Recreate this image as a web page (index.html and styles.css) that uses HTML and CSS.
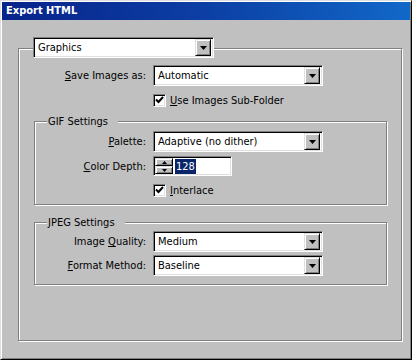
FILE: index.html
```html
<!DOCTYPE html>
<html>
<head>
<meta charset="utf-8">
<title>Export HTML</title>
<link rel="stylesheet" href="styles.css">
</head>
<body>
<div class="window">
  <div class="titlebar">Export HTML</div>
  <div class="client">
    <div class="group outer">
      <div class="select sel-head">
        <span class="val">Graphics</span>
        <span class="dd"><svg width="7" height="4" viewBox="0 0 7 4"><path d="M0 0h7L3.5 4z" fill="#000"/></svg></span>
      </div>

      <div class="row r-save">
        <span class="lbl lbl-outer"><u>S</u>ave Images as:</span>
        <div class="select">
          <span class="val">Automatic</span>
          <span class="dd"><svg width="7" height="4" viewBox="0 0 7 4"><path d="M0 0h7L3.5 4z" fill="#000"/></svg></span>
        </div>
      </div>

      <div class="check c-outer">
        <span class="cb"><svg width="9" height="9" viewBox="0 0 9 9"><path d="M1 3.5l2.5 2.5 4.5-5" stroke="#000" stroke-width="2" fill="none"/></svg></span>
        <span class="ctext"><u>U</u>se Images Sub-Folder</span>
      </div>

      <div class="group inner gif">
        <div class="legend">GIF Settings</div>
        <div class="row r-palette">
          <span class="lbl"><u>P</u>alette:</span>
          <div class="select">
            <span class="val">Adaptive (no dither)</span>
            <span class="dd"><svg width="7" height="4" viewBox="0 0 7 4"><path d="M0 0h7L3.5 4z" fill="#000"/></svg></span>
          </div>
        </div>
        <div class="row r-depth">
          <span class="lbl"><u>C</u>olor Depth:</span>
          <div class="spin">
            <div class="spin-btns">
              <span class="sbtn"><svg width="5" height="3" viewBox="0 0 5 3"><path d="M2.5 0L5 3H0z" fill="#000"/></svg></span>
              <span class="sbtn"><svg width="5" height="3" viewBox="0 0 5 3"><path d="M0 0h5L2.5 3z" fill="#000"/></svg></span>
            </div>
            <span class="spin-val"><span class="hl">128</span></span>
          </div>
        </div>
        <div class="check c-inner">
          <span class="cb"><svg width="9" height="9" viewBox="0 0 9 9"><path d="M1 3.5l2.5 2.5 4.5-5" stroke="#000" stroke-width="2" fill="none"/></svg></span>
          <span class="ctext"><u>I</u>nterlace</span>
        </div>
      </div>

      <div class="group inner jpeg">
        <div class="legend">JPEG Settings</div>
        <div class="row r-quality">
          <span class="lbl">Image <u>Q</u>uality:</span>
          <div class="select">
            <span class="val">Medium</span>
            <span class="dd"><svg width="7" height="4" viewBox="0 0 7 4"><path d="M0 0h7L3.5 4z" fill="#000"/></svg></span>
          </div>
        </div>
        <div class="row r-format">
          <span class="lbl"><u>F</u>ormat Method:</span>
          <div class="select">
            <span class="val">Baseline</span>
            <span class="dd"><svg width="7" height="4" viewBox="0 0 7 4"><path d="M0 0h7L3.5 4z" fill="#000"/></svg></span>
          </div>
        </div>
      </div>
    </div>
  </div>
</div>
</body>
</html>
```

FILE: styles.css
```css
* { box-sizing: border-box; }

html, body {
  margin: 0;
  padding: 0;
  background: #c0c0c0;
}

body {
  width: 412px;
  height: 360px;
  overflow: hidden;
  font-family: "DejaVu Sans Condensed", "Liberation Sans", sans-serif;
  font-size: 11px;
  color: #000;
}

.window {
  width: 412px;
  height: 360px;
  background: #c0c0c0;
  border: 1px solid;
  border-color: #dfdfdf #000 #000 #dfdfdf;
  box-shadow: inset 1px 1px 0 #fff, inset -1px -1px 0 #808080;
  padding: 1px;
  display: flex;
  flex-direction: column;
}

.titlebar {
  height: 18px;
  line-height: 18px;
  padding-left: 4px;
  color: #fff;
  font-weight: bold;
  background: linear-gradient(to right, #08238a 0%, #0c3fa4 50%, #1168c8 100%);
}

.client {
  flex: 1;
  padding: 28px 0 0 16px;
}

.group {
  display: flex;
  flex-direction: column;
  align-items: flex-start;
  border: 1px solid #808080;
  box-shadow: inset 1px 1px 0 #fff, 1px 1px 0 #fff;
}

.outer {
  width: 384px;
  height: 293px;
}

.inner {
  margin-left: 15px;
  width: 353px;
}

.gif {
  margin-top: 14px;
  padding-bottom: 7px;
}

.jpeg {
  margin-top: 17px;
  padding-bottom: 8px;
}

.legend {
  margin-top: -7px;
  margin-left: 12px;
  height: 13px;
  line-height: 13px;
  padding: 0 10px 0 1px;
  background: #c0c0c0;
}

/* select boxes */
.select {
  display: flex;
  align-items: center;
  width: 170px;
  height: 21px;
  background: #fff;
  border: 1px solid;
  border-color: #808080 #fff #fff #808080;
  box-shadow: inset 1px 1px 0 #000, inset -1px -1px 0 #dfdfdf;
  padding: 2px;
}

.select .val {
  flex: 1;
  padding-left: 2px;
  white-space: nowrap;
  line-height: 17px;
}

.dd {
  width: 16px;
  height: 17px;
  background: #c0c0c0;
  border: 1px solid;
  border-color: #dfdfdf #000 #000 #dfdfdf;
  box-shadow: inset 1px 1px 0 #fff, inset -1px -1px 0 #808080;
  display: flex;
  align-items: center;
  justify-content: center;
}

.dd svg { display: block; }

.sel-head {
  margin-top: -12px;
  margin-left: 14px;
  width: 181px;
}

/* rows */
.row {
  display: flex;
  align-items: center;
}

.lbl {
  width: 118px;
  padding-right: 7px;
  text-align: right;
  white-space: nowrap;
}

.lbl-outer { width: 134px; }

.r-save { margin-top: 7px; }
.r-palette { margin-top: 3px; }
.r-depth { margin-top: 4px; }
.r-quality { margin-top: 2px; }
.r-format { margin-top: 3px; }

/* checkboxes */
.check {
  display: flex;
  align-items: center;
  height: 13px;
}

.c-outer { margin-top: 8px; margin-left: 134px; }
.c-inner { margin-top: 8px; margin-left: 118px; }

.cb {
  width: 13px;
  height: 13px;
  background: #fff;
  border: 1px solid;
  border-color: #808080 #fff #fff #808080;
  box-shadow: inset 1px 1px 0 #000, inset -1px -1px 0 #dfdfdf;
  display: flex;
  align-items: center;
  justify-content: center;
}

.cb svg { display: block; }

.ctext {
  margin-left: 4px;
  white-space: nowrap;
}

/* spinner */
.spin {
  display: flex;
  width: 79px;
  height: 20px;
  background: #fff;
  border: 1px solid;
  border-color: #808080 #fff #fff #808080;
  box-shadow: inset 1px 1px 0 #000, inset -1px -1px 0 #dfdfdf;
  padding: 1px;
}

.spin-btns {
  display: flex;
  flex-direction: column;
  width: 18px;
}

.sbtn {
  flex: 1;
  background: #c0c0c0;
  border: 1px solid;
  border-color: #dfdfdf #000 #000 #dfdfdf;
  box-shadow: inset 1px 1px 0 #fff, inset -1px -1px 0 #808080;
  display: flex;
  align-items: center;
  justify-content: center;
}

.sbtn svg { display: block; }

.spin-val {
  display: flex;
  align-items: center;
  padding-left: 2px;
}

.hl {
  background: #0a246a;
  color: #fff;
  line-height: 15px;
  padding: 0 1px;
}
```
